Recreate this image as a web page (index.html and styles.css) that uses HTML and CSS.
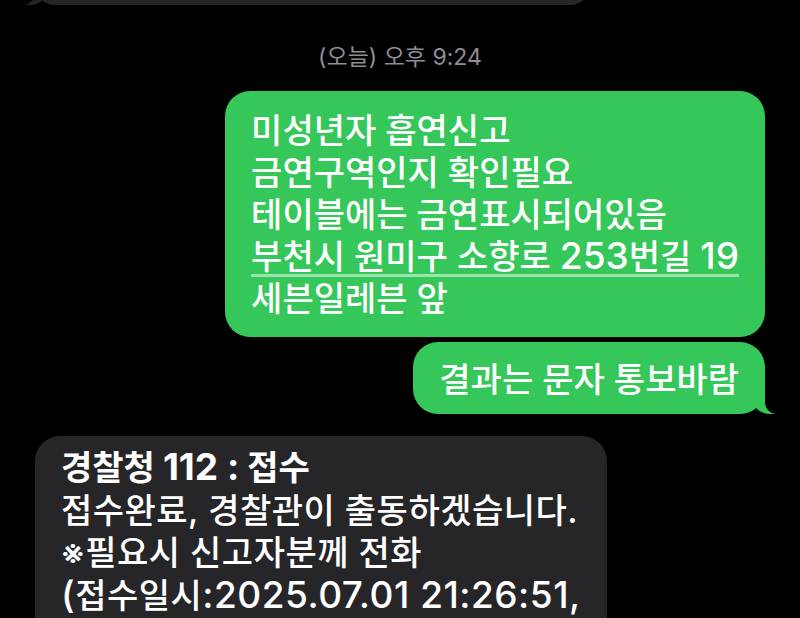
FILE: index.html
```html
<!DOCTYPE html>
<html lang="ko">
<head>
<meta charset="utf-8">
<link rel="stylesheet" href="styles.css">
</head>
<body>
<div class="thread">
  <div class="bubble received prev"></div>
  <div class="stamp">(오늘) 오후 9:24</div>
  <div class="bubble sent first">미성년자 흡연신고<br>금연구역인지 확인필요<br>테이블에는 금연표시되어있음<br><span class="link">부천시 원미구 소향로 <span class="num">253</span>번길 <span class="num">19</span></span><br>세븐일레븐 앞</div>
  <div class="bubble sent last tail">결과는 문자 통보바람</div>
  <div class="bubble received reply"><b class="title">경찰청 <span class="num">112 :</span> 접수</b><br>접수완료, 경찰관이 출동하겠습니다.<br>※필요시 신고자분께 전화<br><span class="num">(</span>접수일시<span class="num">:2025.07.01 21:26:51,</span></div>
</div>
</body>
</html>
```
FILE: styles.css
```css
html, body {
  margin: 0;
  padding: 0;
  background: #000;
  height: 100%;
  overflow: hidden;
}
.thread {
  display: flex;
  flex-direction: column;
  font-family: "Inter", "Noto Sans CJK KR", sans-serif;
  color: #fff;
}
.bubble {
  position: relative;
  border-radius: 25px;
  font-size: 34px;
  font-weight: 500;
  line-height: 42px;
  padding: 19px 26px 17px 26px;
  white-space: nowrap;
}
.num {
  font-size: 37px;
  line-height: 1;
}
.sent {
  align-self: flex-end;
  margin-right: 35px;
  background: #35c759;
}
.received {
  align-self: flex-start;
  margin-left: 35px;
  background: #262628;
}
.prev {
  width: 555px;
  height: 40px;
  padding: 0;
  margin-top: -35px;
}
.prev::before {
  content: "";
  position: absolute;
  bottom: 0;
  left: -12px;
  width: 24px;
  height: 25px;
  background: #262628;
  border-bottom-right-radius: 18px 14px;
}
.prev::after {
  content: "";
  position: absolute;
  bottom: 0;
  left: -30px;
  width: 30px;
  height: 25px;
  background: #000;
  border-bottom-right-radius: 12px;
}
.stamp {
  text-align: center;
  font-size: 23px;
  line-height: 26px;
  color: #8e8e93;
  margin-top: 39px;
}
.first {
  margin-top: 21px;
}
.last {
  margin-top: 5px;
  padding-top: 17px;
  padding-bottom: 13px;
}
.tail::before {
  content: "";
  position: absolute;
  bottom: 0;
  right: -12px;
  width: 24px;
  height: 25px;
  background: #35c759;
  border-bottom-left-radius: 18px 14px;
}
.tail::after {
  content: "";
  position: absolute;
  bottom: 0;
  right: -30px;
  width: 30px;
  height: 25px;
  background: #000;
  border-bottom-left-radius: 12px;
}
.link {
  text-decoration: underline;
  text-decoration-color: rgba(255, 255, 255, 0.5);
  text-decoration-thickness: 3px;
  text-underline-offset: 5px;
}
.reply {
  margin-top: 22px;
  line-height: 42.5px;
  letter-spacing: 0.5px;
  padding-top: 11px;
  padding-bottom: 40px;
}
.title {
  font-weight: 700;
  letter-spacing: 0;
}
```
